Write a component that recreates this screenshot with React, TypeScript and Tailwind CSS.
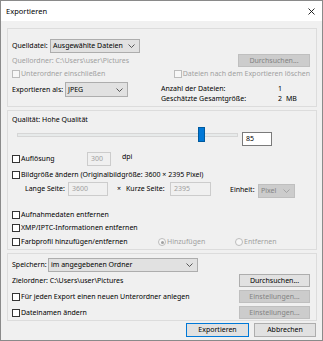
import React from "react";

const Chevron = ({ c = "#333" }: { c?: string }) => (
  <svg width="7" height="4" viewBox="0 0 7 4">
    <path d="M0.5 0.5 L3.5 3.5 L6.5 0.5" fill="none" stroke={c} strokeWidth="0.8" />
  </svg>
);

function Check({ label, disabled }: { label: string; disabled?: boolean }) {
  return (
    <div className="flex items-center h-[10px]">
      <div
        className={
          disabled
            ? "w-[8px] h-[8px] shrink-0 border border-[#bcbcbc] bg-[#f7f7f7]"
            : "w-[8px] h-[8px] shrink-0 border border-[#333333] bg-white"
        }
      />
      <span className={disabled ? "ml-[1px] text-[#a0a0a0] whitespace-nowrap" : "ml-[1px] text-black whitespace-nowrap"}>
        {label}
      </span>
    </div>
  );
}

function Radio({ label, selected }: { label: string; selected?: boolean }) {
  return (
    <div className="flex items-center h-[10px]">
      <div className="w-[8px] h-[8px] shrink-0 rounded-full border border-[#bcbcbc] bg-[#f7f7f7] flex items-center justify-center">
        {selected ? <div className="w-[3px] h-[3px] rounded-full bg-[#a0a0a0]" /> : null}
      </div>
      <span className="ml-[1px] text-[#a0a0a0] whitespace-nowrap">{label}</span>
    </div>
  );
}

function Btn({ label, disabled, w = "w-[71px]", primary }: { label: string; disabled?: boolean; w?: string; primary?: boolean }) {
  let cls = "h-[13px] flex items-center justify-center border whitespace-nowrap ";
  if (disabled) cls += "bg-[#cccccc] border-[#bfbfbf] text-[#838383]";
  else if (primary) cls += "bg-[#e1e1e1] border-[#0078d7] text-black";
  else cls += "bg-[#e1e1e1] border-[#adadad] text-black";
  return <div className={w + " " + cls}>{label}</div>;
}

function Select({ label, w, disabled, h = "h-[14px]" }: { label: string; w: string; disabled?: boolean; h?: string }) {
  const cls = disabled
    ? "bg-[#cccccc] border-[#bfbfbf] text-[#838383]"
    : "bg-[#e1e1e1] border-[#adadad] text-black";
  return (
    <div className={`${w} ${h} border ${cls} flex items-center justify-between pl-[2px] pr-[4px] whitespace-nowrap`}>
      <span>{label}</span>
      <Chevron c={disabled ? "#9a9a9a" : "#333333"} />
    </div>
  );
}

function DisInput({ value, w }: { value: string; w: string }) {
  return (
    <div className={`${w} h-[14px] border border-[#cccccc] bg-[#f0f0f0] text-[#a0a0a0] flex items-center pl-[3px]`}>
      {value}
    </div>
  );
}

export default function App() {
  return (
    <div className="w-[323px] h-[341px] border border-[#8a8a8a] bg-[#f0f0f0] flex flex-col font-['Noto_Sans',sans-serif] text-[7px] leading-[10px] text-black overflow-hidden">
      {/* Title bar */}
      <div className="h-[20px] bg-white flex items-center justify-between pl-[5px] pr-[7px] shrink-0">
        <span className="text-[7.5px]">Exportieren</span>
        <svg width="7" height="7" viewBox="0 0 7 7">
          <path d="M0.5 0.5 L6.5 6.5 M6.5 0.5 L0.5 6.5" stroke="#111" strokeWidth="0.9" />
        </svg>
      </div>

      {/* Group 1 */}
      <div className="ml-[6px] mt-[7px] w-[310px] h-[79px] shrink-0 border border-[#dcdcdc] pl-[4px] pr-[6px] pt-[9px] flex flex-col">
        <div className="flex items-center h-[15px]">
          <span className="w-[38px]">Quelldatei:</span>
          <Select label="Ausgewählte Dateien" w="w-[90px]" />
        </div>
        <div className="flex items-center justify-between h-[15px]">
          <span className="text-[#a0a0a0]">Quellordner: C:\Users\user\Pictures</span>
          <Btn label="Durchsuchen..." disabled w="w-[72px]" />
        </div>
        <div className="flex items-center h-[10px] mt-[1px]">
          <div className="w-[168px]">
            <Check label="Unterordner einschließen" disabled />
          </div>
          <Check label="Dateien nach dem Exportieren löschen" disabled />
        </div>
        <div className="flex items-start mt-[3px]">
          <div className="w-[149px] flex items-center h-[15px]">
            <span className="w-[53px]">Exportieren als:</span>
            <Select label="JPEG" w="w-[63px]" h="h-[15px]" />
          </div>
          <div className="flex flex-col pt-[2px]">
            <div className="flex h-[10px] items-center">
              <span className="w-[117px]">Anzahl der Dateien:</span>
              <span>1</span>
            </div>
            <div className="flex h-[10px] items-center">
              <span className="w-[117px]">Geschätzte Gesamtgröße:</span>
              <span className="w-[8px]">2</span>
              <span>MB</span>
            </div>
          </div>
        </div>
      </div>

      {/* Group 2 */}
      <div className="ml-[6px] mt-[3px] w-[310px] h-[140px] shrink-0 border border-[#dcdcdc] pl-[4px] pr-[6px] pt-[4px] flex flex-col">
        <div className="h-[10px] flex items-center">Qualität: Hohe Qualität</div>
        <div className="flex items-start mt-[2px] h-[19px]">
          <div className="ml-[5px] w-[221px] h-[15px] relative">
            <div className="absolute left-0 right-0 top-[6px] h-[4px] bg-[#e7eaea] border border-[#d6d6d6]" />
            <div className="absolute left-[181px] top-0 w-[7px] h-[15px] bg-[#0078d7] border border-[#005a9e]" />
          </div>
          <div className="ml-[4px] mt-[5px] w-[30px] h-[14px] border border-[#7a7a7a] bg-white flex items-center pl-[3px]">85</div>
        </div>
        <div className="flex items-start mt-[6px] h-[14px]">
          <div className="w-[75px] h-[14px] flex items-center">
            <Check label="Auflösung" />
          </div>
          <DisInput value="300" w="w-[24px]" />
          <span className="ml-[11px] h-[10px] flex items-center">dpi</span>
        </div>
        <div className="mt-[4px]">
          <Check label="Bildgröße ändern (Originalbildgröße: 3600 × 2395 Pixel)" />
        </div>
        <div className="flex items-start mt-[2px] h-[16px]">
          <span className="ml-[13px] w-[43px] mt-[2px] h-[10px] flex items-center">Lange Seite:</span>
          <DisInput value="3600" w="w-[40px]" />
          <span className="ml-[9px] w-[9px] mt-[2px] h-[10px] flex items-center">×</span>
          <span className="w-[44px] mt-[2px] h-[10px] flex items-center">Kurze Seite:</span>
          <DisInput value="2395" w="w-[41px]" />
          <span className="ml-[19px] w-[28px] mt-[3px] h-[10px] flex items-center">Einheit:</span>
          <div className="mt-[2px]">
            <Select label="Pixel" w="w-[37px]" disabled />
          </div>
        </div>
        <div className="mt-[12px]">
          <Check label="Aufnahmedaten entfernen" />
        </div>
        <div className="mt-[3px]">
          <Check label="XMP/IPTC-Informationen entfernen" />
        </div>
        <div className="mt-[4px] flex items-center h-[10px]">
          <div className="w-[146px]">
            <Check label="Farbprofil hinzufügen/entfernen" />
          </div>
          <div className="w-[77px]">
            <Radio label="Hinzufügen" selected />
          </div>
          <Radio label="Entfernen" />
        </div>
      </div>

      {/* Group 3 */}
      <div className="ml-[6px] mt-[3px] w-[310px] h-[68px] shrink-0 border border-[#dcdcdc] pl-[4px] pr-[6px] pt-[4px] flex flex-col">
        <div className="flex items-center h-[14px]">
          <span className="w-[36px]">Speichern:</span>
          <Select label="im angegebenen Ordner" w="w-[150px]" />
        </div>
        <div className="flex items-center justify-between h-[13px] mt-[2px]">
          <span>Zielordner: C:\Users\user\Pictures</span>
          <Btn label="Durchsuchen..." />
        </div>
        <div className="flex items-center justify-between h-[13px] mt-[3px]">
          <Check label="Für jeden Export einen neuen Unterordner anlegen" />
          <Btn label="Einstellungen..." disabled />
        </div>
        <div className="flex items-center justify-between h-[13px] mt-[3px]">
          <Check label="Dateinamen ändern" />
          <Btn label="Einstellungen..." disabled />
        </div>
      </div>

      {/* Bottom buttons */}
      <div className="flex justify-end gap-[5px] mt-[2px] pr-[6px] shrink-0">
        <Btn label="Exportieren" primary w="w-[63px] h-[14px]" />
        <Btn label="Abbrechen" w="w-[62px] h-[14px]" />
      </div>
    </div>
  );
}
